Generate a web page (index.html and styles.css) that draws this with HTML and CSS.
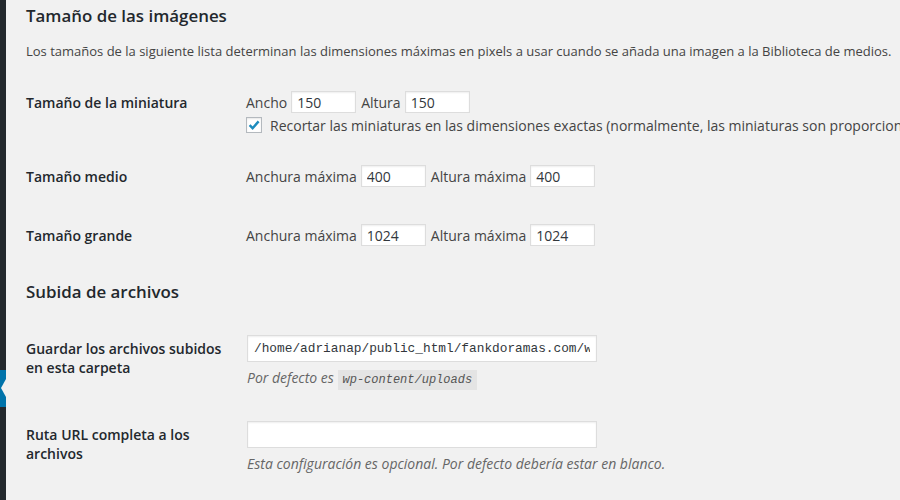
FILE: index.html
```html
<!DOCTYPE html>
<html lang="es">
<head>
<meta charset="utf-8">
<title>Ajustes de medios</title>
<link rel="stylesheet" href="styles.css">
</head>
<body>
<div class="admin">
  <nav class="menu"><div class="menu-current"></div></nav>
  <main class="content">
    <h2 class="title">Tamaño de las imágenes</h2>
    <p class="intro">Los tamaños de la siguiente lista determinan las dimensiones máximas en pixels a usar cuando se añada una imagen a la Biblioteca de medios.</p>

    <div class="row row-thumb">
      <div class="label">Tamaño de la miniatura</div>
      <div class="field">
        <div class="inline">
          <span>Ancho</span><input class="num" type="text" value="150" readonly>
          <span>Altura</span><input class="num" type="text" value="150" readonly>
        </div>
        <div class="check">
          <span class="box"><svg viewBox="0 0 16 16" width="16" height="16"><path d="M3.6 8.2 L6.6 11.2 L12.6 4.4" fill="none" stroke="#1e8cbe" stroke-width="2.4"/></svg></span>
          <span class="check-text">Recortar las miniaturas en las dimensiones exactas (normalmente, las miniaturas son proporcionales)</span>
        </div>
      </div>
    </div>

    <div class="row">
      <div class="label">Tamaño medio</div>
      <div class="field">
        <div class="inline">
          <span>Anchura máxima</span><input class="num" type="text" value="400" readonly>
          <span>Altura máxima</span><input class="num" type="text" value="400" readonly>
        </div>
      </div>
    </div>

    <div class="row">
      <div class="label">Tamaño grande</div>
      <div class="field">
        <div class="inline">
          <span>Anchura máxima</span><input class="num" type="text" value="1024" readonly>
          <span>Altura máxima</span><input class="num" type="text" value="1024" readonly>
        </div>
      </div>
    </div>

    <h2 class="title section">Subida de archivos</h2>

    <div class="row row-wide">
      <div class="label">Guardar los archivos subidos en esta carpeta</div>
      <div class="field">
        <input class="wide mono" type="text" value="/home/adrianap/public_html/fankdoramas.com/wp-content/uploads" readonly>
        <p class="desc">Por defecto es <code>wp-content/uploads</code></p>
      </div>
    </div>

    <div class="row row-wide row-last">
      <div class="label">Ruta URL completa a los archivos</div>
      <div class="field">
        <input class="wide" type="text" value="" readonly>
        <p class="desc">Esta configuración es opcional. Por defecto debería estar en blanco.</p>
      </div>
    </div>
  </main>
</div>
</body>
</html>
```
FILE: styles.css
```css
html, body {
  margin: 0;
  padding: 0;
  height: 100%;
  overflow: hidden;
}

body {
  background: #f1f1f1;
  font-family: "Open Sans", "Noto Sans", sans-serif;
  font-size: 14px;
  color: #444;
}

.admin {
  display: flex;
  min-height: 100%;
}

.menu {
  flex: 0 0 6px;
  background: #23282d;
}

.menu-current {
  position: relative;
  margin-top: 370px;
  height: 37px;
  background: #0073aa;
}

.menu-current::after {
  content: "";
  position: absolute;
  right: 0;
  top: 9px;
  border-style: solid;
  border-width: 9px 5px 9px 0;
  border-color: transparent #f1f1f1 transparent transparent;
}

.content {
  flex: 1;
  min-width: 0;
  padding-left: 20px;
  white-space: nowrap;
  overflow: hidden;
}

.title {
  margin: 4px 0 0;
  font-size: 16.9px;
  line-height: 24px;
  font-weight: 600;
  color: #23282d;
}

.title.section {
  margin: 15px 0 13px;
}

.intro {
  margin: 13px 0 0;
  font-size: 13px;
  line-height: 20px;
}

.row {
  display: grid;
  grid-template-columns: 220px 1fr;
  padding: 18px 0 19px;
}

.row-thumb {
  margin-top: 12px;
  padding-bottom: 10px;
}

.label {
  font-weight: 600;
  color: #23282d;
  line-height: 19px;
  padding-top: 2px;
  white-space: normal;
  padding-right: 20px;
}

.row-wide {
  padding-bottom: 11px;
}

.row-wide .label {
  padding-top: 4px;
}

.inline {
  display: flex;
  align-items: center;
  gap: 4px;
  height: 22px;
}

.inline .num + span {
  margin-left: 1px;
}

input {
  font-family: "Open Sans", "Noto Sans", sans-serif;
  font-size: 14px;
  color: #32373c;
  background: #fff;
  border: 1px solid #ddd;
  box-shadow: inset 0 1px 2px rgba(0, 0, 0, 0.07);
  margin: 0;
  outline: none;
  box-sizing: border-box;
}

.num {
  width: 65px;
  height: 22px;
  padding: 0 5px;
}

.wide {
  display: block;
  width: 350px;
  height: 27px;
  padding: 0 6px;
  margin-left: 1px;
}

.mono {
  font-family: "Liberation Mono", "DejaVu Sans Mono", monospace;
  font-size: 12.8px;
}

.check {
  display: flex;
  align-items: center;
  gap: 8px;
  height: 24px;
}

.box {
  display: block;
  flex: 0 0 16px;
  width: 16px;
  height: 16px;
  box-sizing: border-box;
  border: 1px solid #b4b9be;
  background: #fff;
  box-shadow: inset 0 1px 2px rgba(0, 0, 0, 0.1);
}

.box svg {
  display: block;
  margin: -1px;
}

.desc {
  margin: 4px 0 0 1px;
  line-height: 24px;
  font-style: italic;
  color: #666;
}

code {
  font-family: "Liberation Mono", "DejaVu Sans Mono", monospace;
  font-size: 12px;
  font-style: italic;
  color: #555;
  background: #e4e4e4;
  padding: 3px 5px;
}
```
